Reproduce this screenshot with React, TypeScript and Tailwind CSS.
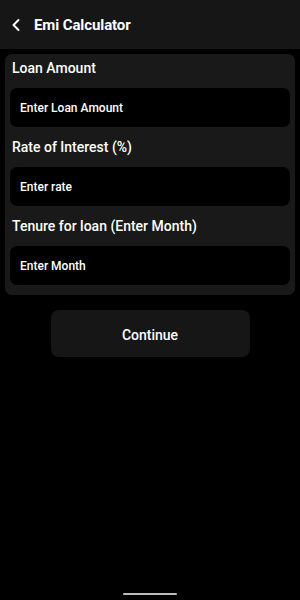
import { ChevronLeft } from "lucide-react";

const fields = [
  { label: "Loan Amount", placeholder: "Enter Loan Amount" },
  { label: "Rate of Interest (%)", placeholder: "Enter rate" },
  { label: "Tenure for loan (Enter Month)", placeholder: "Enter Month" },
];

export default function App() {
  return (
    <div
      className="w-[300px] h-[600px] bg-black text-white flex flex-col relative overflow-hidden"
      style={{ fontFamily: "Roboto, 'Noto Sans', sans-serif" }}
    >
      {/* top bar */}
      <div className="h-[49px] bg-[#161616] flex items-center pl-[6px] pt-[1px] shrink-0">
        <ChevronLeft size={20} strokeWidth={2.4} className="text-white" />
        <span className="ml-[8px] text-[15px] font-bold tracking-[-0.1px]">Emi Calculator</span>
      </div>

      {/* form card */}
      <div className="mx-[5px] mt-[5px] bg-[#191919] rounded-[7px] px-[5px] pb-[10px] flex flex-col gap-[6px]">
        {fields.map((f) => (
          <div key={f.label} className="flex flex-col">
            <div className="h-[34px] pt-[4px] pl-[2px] text-[14px] leading-[20px] font-medium">{f.label}</div>
            <input
              placeholder={f.placeholder}
              className="h-[39px] bg-black rounded-[7px] px-[10px] text-[12px] font-medium text-white placeholder:text-white outline-none"
            />
          </div>
        ))}
      </div>

      {/* continue button */}
      <button className="mt-[15px] mx-auto w-[199px] h-[47px] pt-[3px] bg-[#161616] rounded-[8px] text-[14px] font-medium text-white">
        Continue
      </button>

      {/* home indicator */}
      <div className="absolute bottom-[5px] left-[123px] w-[54px] h-[2px] rounded-full bg-[#bdbdbd]" />
    </div>
  );
}
